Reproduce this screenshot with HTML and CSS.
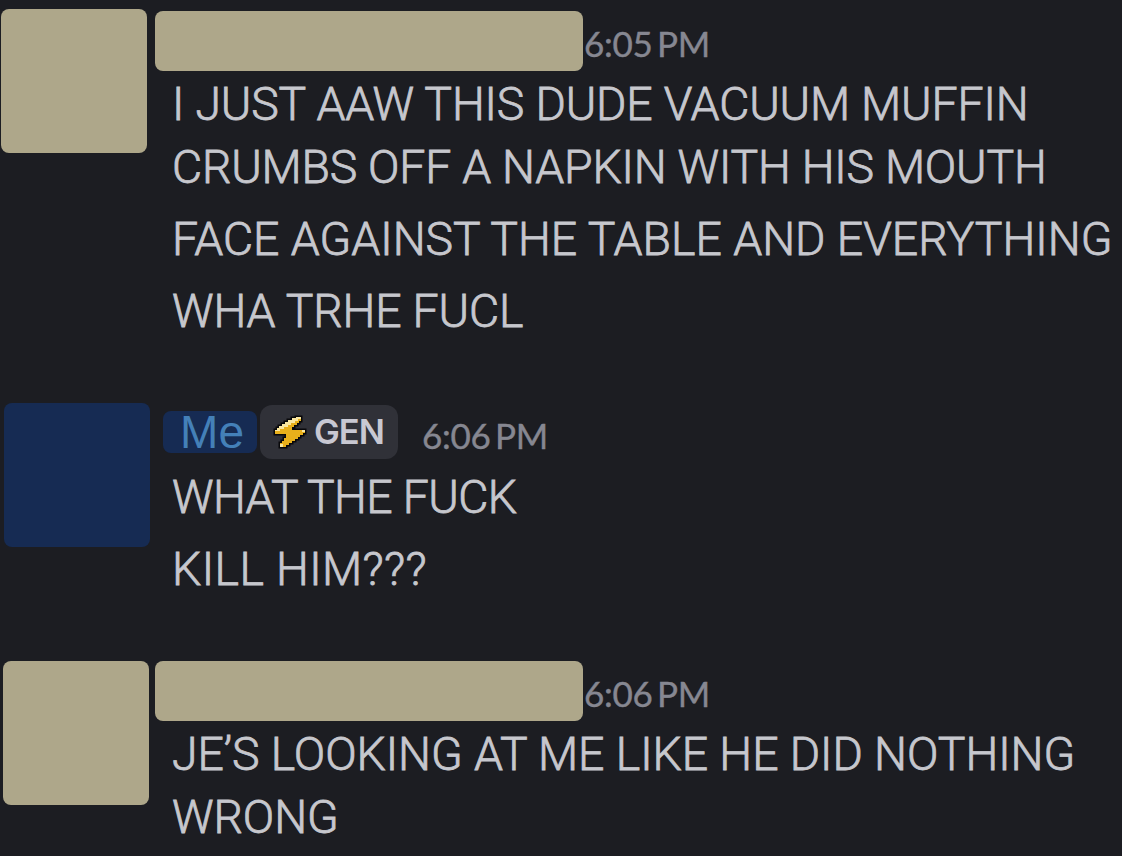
FILE: index.html
```html
<!DOCTYPE html>
<html lang="en">
<head>
<meta charset="utf-8">
<title>Chat</title>
<link rel="stylesheet" href="styles.css">
</head>
<body>
<main class="chat">
  <article class="message first">
    <div class="avatar"></div>
    <div class="content">
      <header class="head"><span class="name"></span><time class="time">6:05 PM</time></header>
      <p class="line l1">I JUST AAW THIS DUDE VACUUM MUFFIN</p>
      <p class="line l2">CRUMBS OFF A NAPKIN WITH HIS MOUTH</p>
      <p class="line l3 next">FACE AGAINST THE TABLE AND EVERYTHING</p>
      <p class="line l4 next">WHA TRHE FUCL</p>
    </div>
  </article>
  <article class="message mine">
    <div class="avatar"></div>
    <div class="content">
      <header class="head">
        <span class="me">Me</span>
        <span class="tag">
          <svg class="bolt" width="34" height="36" viewBox="0 0 34 36" aria-hidden="true">
            <path d="M23 3H28V7H26V9H24V11H21V13H19V16H32V19H30V21H27V23H25V25H22V27H19V29H16V31H13V33H7V29H9V27H11V24H13V20H2V16H4V14H6V12H9V10H12V8H15V6H19V4H23Z" fill="#e9b01b" stroke="#08080a" stroke-width="3" paint-order="stroke"/>
            <path d="M23 3H28V5H25V7H22V9H18V11H15V13H11V15H7V17H2V16H4V14H6V12H9V10H12V8H15V6H19V4H23ZM29 16H32V18H29ZM7 30H10V33H7Z" fill="#fae7a0"/>
          </svg>
          <span class="tag-text">GEN</span>
        </span>
        <time class="time">6:06 PM</time>
      </header>
      <p class="line l5">WHAT THE FUCK</p>
      <p class="line l6 next">KILL HIM???</p>
    </div>
  </article>
  <article class="message last">
    <div class="avatar"></div>
    <div class="content">
      <header class="head"><span class="name"></span><time class="time">6:06 PM</time></header>
      <p class="line l7">JE’S LOOKING AT ME LIKE HE DID NOTHING</p>
      <p class="line l8">WRONG</p>
    </div>
  </article>
</main>
</body>
</html>
```
FILE: styles.css
```css
* { box-sizing: border-box; }
body { margin: 0; background: #1c1d22; overflow: hidden; }
.chat { width: 1122px; height: 856px; overflow: hidden; }
.message { display: flex; align-items: flex-start; }
.first { height: 394px; padding: 9px 0 0 1px; }
.mine { height: 258px; padding: 9px 0 0 4px; }
.last { padding: 9px 0 0 3px; }
.avatar { flex: none; width: 146px; height: 144px; border-radius: 8px; background: #aea78a; }
.mine .avatar { background: #162b53; }
.first .content { margin-left: 8px; }
.mine .content { margin-left: 13px; }
.last .content { margin-left: 6px; }
.head { display: flex; height: 64px; }
.first .head { padding-top: 2px; }
.mine .head { height: 63px; }
.last .head { height: 62px; }
.name { width: 428px; height: 60px; border-radius: 8px; background: #aea78a; }
.time { margin: 10px 0 0 1px; font: 400 35px/44px Lato, sans-serif; letter-spacing: -.3px; word-spacing: -4px; color: #868791; -webkit-text-stroke: .4px #868791; white-space: nowrap; }
.me { width: 94px; height: 42px; margin-top: 8px; padding-left: 17px; border-radius: 8px; background: #162b53; color: #4480b8; font: 46px/42px "Liberation Sans", Arial, sans-serif; letter-spacing: .3px; }
.tag { display: flex; align-items: center; width: 138px; height: 54px; margin: 2px 0 0 3px; padding-left: 13px; border-radius: 12px; background: #303138; }
.tag-text { margin-left: 7px; font: 600 34.5px/50px Inter, sans-serif; letter-spacing: -1px; color: #c8c8d2; }
.mine .time { margin: 10px 0 0 24px; }
.line { margin: 0; padding-left: 17px; font: 300 46.4px/63px Roboto, sans-serif; color: #c6c7cd; -webkit-text-stroke: .8px #c6c7cd; white-space: nowrap; }
.mine .line { padding-left: 9px; }
.next { margin-top: 9px; }
.l1 { letter-spacing: -.13px; }
.l2 { letter-spacing: -.2px; }
.l4 { letter-spacing: -.15px; }
.l5 { letter-spacing: -.62px; }
.l6 { letter-spacing: .42px; }
.l7 { letter-spacing: -.04px; }
.l8 { letter-spacing: -.1px; }
```
